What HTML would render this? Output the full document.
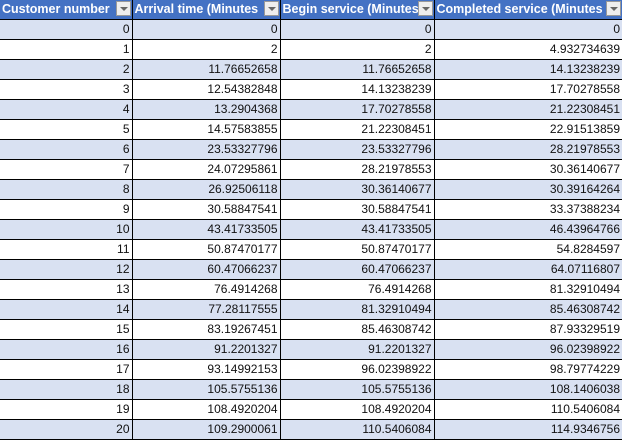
<!DOCTYPE html>
<html><head><style>
body{margin:0;width:622px;height:439px;overflow:hidden;background:#fff;font-family:"Liberation Sans",sans-serif;}
table{border-collapse:collapse;table-layout:fixed;position:absolute;left:0;top:0;}
td{height:20px;padding:0 2px 0 0;border-right:1px solid #000;border-bottom:1px solid #000;text-align:right;font-size:12px;color:#111;white-space:nowrap;overflow:hidden;box-sizing:border-box;}
tr:nth-child(even) td{background:#D9E1F2;}
tr:nth-child(odd) td{background:#fff;}
tr.h td{background:#4472C4;color:#fff;font-weight:bold;text-align:left;padding-left:2px;height:19px;position:relative;font-size:12.5px;}
td:last-child{border-right:none;}
.f{position:absolute;right:1px;top:1px;width:15px;height:15px;background:#eee;border:1px solid #999;box-sizing:border-box;}
.f:after{content:"";position:absolute;left:3px;top:5px;border-left:4px solid transparent;border-right:4px solid transparent;border-top:4px solid #666;}
</style></head><body>
<table>
<colgroup><col style="width:132px"><col style="width:148px"><col style="width:154px"><col style="width:188px"></colgroup>
<tr class="h"><td>Customer number<span class="f"></span></td><td>Arrival time (Minutes<span class="f"></span></td><td>Begin service (Minutes<span class="f"></span></td><td>Completed service (Minutes<span class="f"></span></td></tr>
<tr><td>0</td><td>0</td><td>0</td><td>0</td></tr>
<tr><td>1</td><td>2</td><td>2</td><td>4.932734639</td></tr>
<tr><td>2</td><td>11.76652658</td><td>11.76652658</td><td>14.13238239</td></tr>
<tr><td>3</td><td>12.54382848</td><td>14.13238239</td><td>17.70278558</td></tr>
<tr><td>4</td><td>13.2904368</td><td>17.70278558</td><td>21.22308451</td></tr>
<tr><td>5</td><td>14.57583855</td><td>21.22308451</td><td>22.91513859</td></tr>
<tr><td>6</td><td>23.53327796</td><td>23.53327796</td><td>28.21978553</td></tr>
<tr><td>7</td><td>24.07295861</td><td>28.21978553</td><td>30.36140677</td></tr>
<tr><td>8</td><td>26.92506118</td><td>30.36140677</td><td>30.39164264</td></tr>
<tr><td>9</td><td>30.58847541</td><td>30.58847541</td><td>33.37388234</td></tr>
<tr><td>10</td><td>43.41733505</td><td>43.41733505</td><td>46.43964766</td></tr>
<tr><td>11</td><td>50.87470177</td><td>50.87470177</td><td>54.8284597</td></tr>
<tr><td>12</td><td>60.47066237</td><td>60.47066237</td><td>64.07116807</td></tr>
<tr><td>13</td><td>76.4914268</td><td>76.4914268</td><td>81.32910494</td></tr>
<tr><td>14</td><td>77.28117555</td><td>81.32910494</td><td>85.46308742</td></tr>
<tr><td>15</td><td>83.19267451</td><td>85.46308742</td><td>87.93329519</td></tr>
<tr><td>16</td><td>91.2201327</td><td>91.2201327</td><td>96.02398922</td></tr>
<tr><td>17</td><td>93.14992153</td><td>96.02398922</td><td>98.79774229</td></tr>
<tr><td>18</td><td>105.5755136</td><td>105.5755136</td><td>108.1406038</td></tr>
<tr><td>19</td><td>108.4920204</td><td>108.4920204</td><td>110.5406084</td></tr>
<tr><td>20</td><td>109.2900061</td><td>110.5406084</td><td>114.9346756</td></tr>
</table>
</body></html>
